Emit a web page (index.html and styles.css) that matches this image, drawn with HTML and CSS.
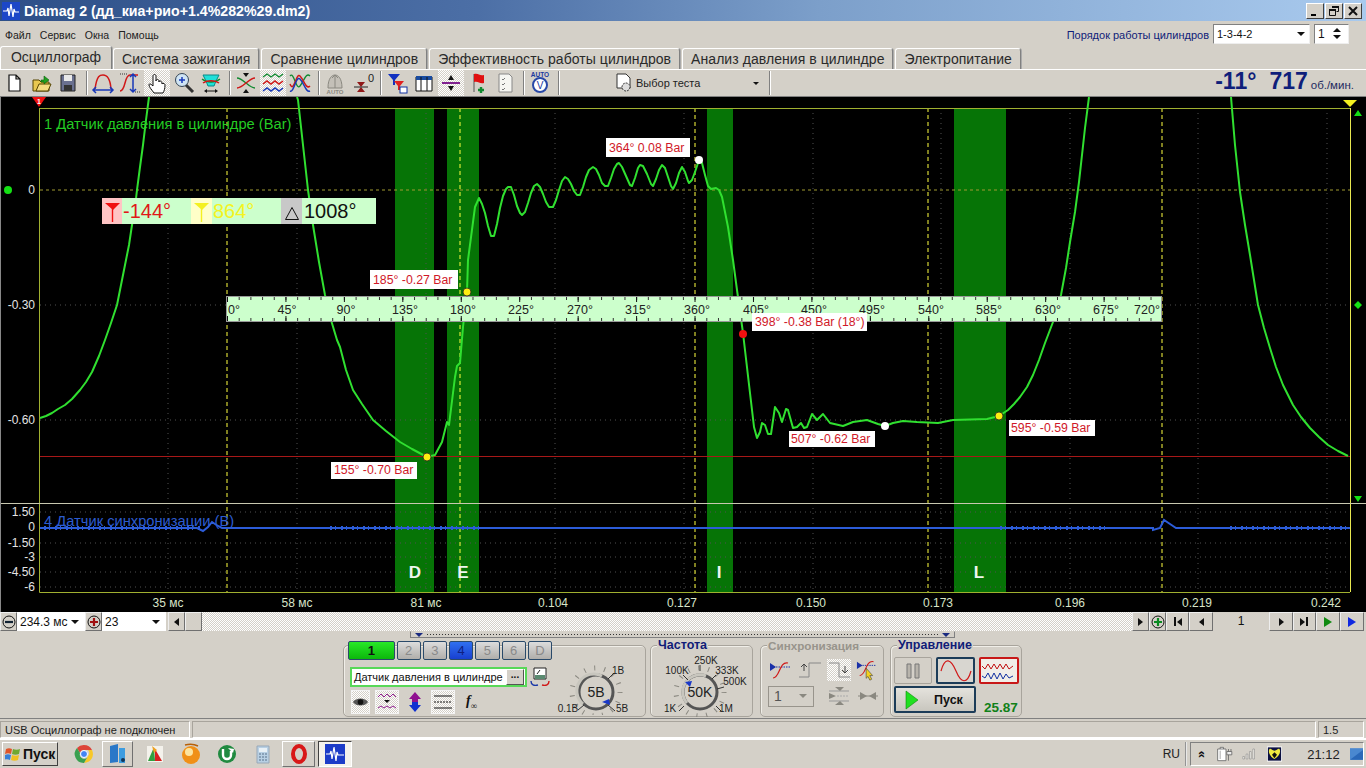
FILE: index.html
```html
<!DOCTYPE html>
<html lang="ru">
<head>
<meta charset="utf-8">
<title>Diamag 2</title>
<link rel="stylesheet" href="styles.css">
</head>
<body>
<div class="app">
  <header class="titlebar">
    <svg class="app-icon" width="18" height="18" viewBox="0 0 18 18"><rect width="18" height="18" fill="#1c47c8"/><path class="w-line" d="M1 9h4l1-3 1 8 2-12 2 13 1-8 1 3h4"/></svg>
    <span class="title-text">Diamag 2 (дд_киа+рио+1.4%282%29.dm2)</span>
    <div class="win-btns">
      <span class="win-btn"><svg width="12" height="12" viewBox="0 0 12 12"><path d="M2 9h5v2H2z"/></svg></span>
      <span class="win-btn"><svg width="12" height="12" viewBox="0 0 12 12"><path class="k-line" d="M4.5 1.5h6v5h-2M1.5 4.5h6v6h-6z"/><path class="k-line2" d="M4 2h7M1 5h7"/></svg></span>
      <span class="win-btn"><svg width="12" height="12" viewBox="0 0 12 12"><path class="k-line2" d="M2 2l8 8M10 2l-8 8"/></svg></span>
    </div>
  </header>

  <div class="menubar">
    <nav class="menu"><span>Файл</span><span>Сервис</span><span>Окна</span><span>Помощь</span></nav>
    <div class="order">
      <span class="order-label">Порядок работы цилиндров</span>
      <div class="combo order-combo"><span>1-3-4-2</span><i class="arrow-down"></i></div>
      <div class="combo order-spin"><span>1</span><div class="spin"><i class="arrow-up"></i><i class="arrow-down"></i></div></div>
    </div>
  </div>

  <div class="tabs">
    <span class="tab active">Осциллограф</span>
    <span class="tab">Система зажигания</span>
    <span class="tab">Сравнение цилиндров</span>
    <span class="tab">Эффективность работы цилиндров</span>
    <span class="tab">Анализ давления в цилиндре</span>
    <span class="tab">Электропитание</span>
  </div>

  <div class="toolbar">
    <div class="tb-group">
      <span class="tb"><svg viewBox="0 0 26 26"><path class="i-page" d="M8 5h7l4 4v12H8zM15 5v4h4"/></svg></span>
      <span class="tb"><svg viewBox="0 0 26 26"><path d="M5 10h6l2 2h8v9H5z" fill="#e8c850" stroke="#554400"/><path d="M8 21l3-7h12l-3 7z" fill="#f4dc80" stroke="#554400"/><path d="M13 10h3V6l5 4-5 4v-2h-3z" fill="#20a020" stroke="#0a600a" stroke-width=".6"/></svg></span>
      <span class="tb"><svg viewBox="0 0 26 26"><path d="M6 5h14v16H6z" fill="#6a7090" stroke="#222"/><path d="M9 5h8v6H9z" fill="#e8e8e8"/><path d="M9 15h8v6H9z" fill="#333"/></svg></span>
    </div>
    <i class="tb-sep"></i>
    <div class="tb-group">
      <span class="tb"><svg viewBox="0 0 26 26"><path class="i-red" d="M5 19C7 5 10 5 13 5s7 1 8 14"/><path class="i-blue" d="M3 20h20M6 17l-3 3 3 3M20 17l3 3-3 3"/></svg></span>
      <span class="tb"><svg viewBox="0 0 26 26"><path class="i-red" d="M3 21c6 0 4-16 10-16h8"/><path class="i-blue" d="M16 4v18M13 7l3-3 3 3M13 19l3 3 3-3"/><path class="i-dots" d="M3 4h8M18 22h6"/></svg></span>
      <span class="tb tb-on"><svg viewBox="0 0 26 26"><path d="M10 23c-2-3-5-6-5-8s2-1 4 1V6c0-2 3-2 3 0v5c0-2 3-2 3 0v1c0-2 3-1 3 1v1c0-1 3-1 3 1 0 4-1 6-2 8z" fill="#fff" stroke="#111"/></svg></span>
      <span class="tb"><svg viewBox="0 0 26 26"><path d="M15 15l7 7" stroke="#333" stroke-width="3"/><circle cx="11" cy="10" r="6.500" fill="#cfe4f4" stroke="#345"/><path class="i-blue" d="M8 10h6M11 7v6"/></svg></span>
      <span class="tb"><svg viewBox="0 0 26 26"><path d="M5 5h16l-3 6-2 5h-6l-2-5z" fill="#20e0d8" stroke="#0a8a88"/><path class="i-green" d="M4 9c5 4 13 4 18 0"/><path class="i-red" d="M5 13c4-3 12-3 16 0"/><path d="M8 21h10" stroke="#111"/><path d="M9 19l-3 2 3 2zM17 19l3 2-3 2z" fill="#111"/></svg></span>
    </div>
    <i class="tb-sep"></i>
    <div class="tb-group">
      <span class="tb"><svg viewBox="0 0 26 26"><path class="i-green" d="M4 8c6 0 12 10 18 10"/><path class="i-red" d="M4 18c6 0 12-10 18-10"/><path d="M10 3h6l-3 4zM10 23h6l-3-4z" fill="#111"/></svg></span>
      <span class="tb tb-on"><svg viewBox="0 0 26 26"><path class="i-green" d="M3 7l4-3 4 3 4-3 4 3 4-3"/><path class="i-red" d="M3 14l4-3 4 3 4-3 4 3 4-3"/><path class="i-blue" d="M3 21l4-3 4 3 4-3 4 3 4-3"/></svg></span>
      <span class="tb"><svg viewBox="0 0 26 26"><path class="i-green" d="M3 6c4-5 6 15 10 10s6-14 10-10"/><path class="i-red" d="M3 14c4 10 6-12 10-8s6 14 10 10"/><path class="i-blue" d="M3 21c4 2 6-16 10-12s6 14 10 12"/></svg></span>
    </div>
    <i class="tb-sep"></i>
    <div class="tb-group">
      <span class="tb"><svg viewBox="0 0 26 26"><path d="M6 18c0-10 4-13 7-13s7 3 7 13z" fill="#c4c0b8" stroke="#8a8880"/><path d="M13 5v13M10 8l3-3 3 3" stroke="#8a8880" fill="none"/><text class="auto-t" x="13" y="24">AUTO</text></svg></span>
      <span class="tb"><svg viewBox="0 0 26 26"><path d="M8 12h8l-4 5zM8 22h8l-4-5z" fill="#901818"/><path d="M5 17h14" stroke="#222"/><text class="zero-t" x="19" y="12">0</text></svg></span>
    </div>
    <i class="tb-sep"></i>
    <div class="tb-group">
      <span class="tb"><svg viewBox="0 0 26 26"><path d="M4 4h12l-5 6v5H9v-5z" fill="#1030c0"/><path d="M10 11h10l-4 5v4h-2v-4z" fill="#e02020"/><rect x="16" y="17" width="7" height="6" fill="#fff" stroke="#1030a0"/></svg></span>
      <span class="tb"><svg viewBox="0 0 26 26"><path d="M5 7h16v14H5z" fill="#fff" stroke="#111"/><path d="M5 6h16v4H5z" fill="#1a4ca0"/><path d="M10 7v14M16 7v14" stroke="#111"/></svg></span>
      <span class="tb tb-on"><svg viewBox="0 0 26 26"><path d="M4 13h18" stroke="#802090" stroke-width="2"/><path d="M10 10l3-5 3 5zM10 16l3 5 3-5z" fill="#111"/></svg></span>
      <span class="tb"><svg viewBox="0 0 26 26"><path d="M9 4v18" stroke="#555"/><path d="M9 4c5-1 5 2 10 1v8c-5 1-5-2-10-1z" fill="#e01010"/><path class="i-green2" d="M16 17v6M13 20h6"/></svg></span>
      <span class="tb"><svg viewBox="0 0 26 26"><path d="M7 4h10l3 3v15H7z" fill="#f6f6f2" stroke="#888"/><path d="M10 9l1 1 2-2M10 14l1 1 2-2M10 19l1 1 2-2" stroke="#777" fill="none"/></svg></span>
    </div>
    <i class="tb-sep"></i>
    <div class="tb-group">
      <span class="tb"><svg viewBox="0 0 26 26"><text class="auto-b" x="13" y="7">AUTO</text><circle cx="13" cy="15" r="7" fill="#fff" stroke="#2848a8" stroke-width="2"/><text class="v-t" x="13" y="19">V</text></svg></span>
    </div>
    <i class="tb-sep"></i>
    <div class="test-select">
      <svg width="20" height="22" viewBox="0 0 20 22"><path d="M3 2h9l4 4v10H3z" fill="#fff" stroke="#333"/><circle cx="12" cy="15" r="4" fill="#ddd" stroke="#333" stroke-dasharray="2 1"/></svg>
      <span>Выбор теста</span><i class="arrow-down"></i>
    </div>
    <i class="tb-sep tb-sep-end"></i>
    <div class="rpm"><b>-11°</b><b>717</b><small>об./мин.</small></div>
  </div>

  <svg class="chart" viewBox="0 97 1366 515" width="1366" height="515">
    <rect class="bg" x="0" y="97" width="1366" height="515"/>
    <g class="band">
      <rect x="395" y="108" width="39" height="485"/><rect x="447" y="108" width="32" height="485"/>
      <rect x="707" y="108" width="26" height="485"/><rect x="954" y="108" width="52" height="485"/>
    </g>
    <path class="grid" d="M168 108V592M297 108V592M426 108V592M555 108V592M684 108V592M813 108V592M941 108V592M1070 108V592M1198 108V592M1327 108V592"/>
    <path class="grid" d="M40 305H1350M40 420H1350M40 512H1350M40 543H1350M40 557H1350M40 572H1350M40 587H1350"/>
    <path class="zero" d="M40 190H1350"/>
    <path class="cursor" d="M227 108V592M460 108V592M695 108V592M928 108V592M1162 108V592"/>
    <path class="frame-top" d="M39.500 108.500H1350M39.500 108V592.500H1350"/>
    <path class="frame-right" d="M1350.500 108V592"/>
    <path class="frame-mid" d="M0 503.500H1366"/>
    <path class="red-line" d="M40 456.500H1350"/>
    <path class="edge" d="M0.500 97V612"/>

    <polyline class="trace" points="40,418 46,416 52,413 58,409 65,405 72,399 80,390 86,382 92,372 99,356 105,340 111,323 117,305 121,285 125,265 129,245 132,225 135,207 137,190 140,167 143,145 146,120 149,97"/>
    <polyline class="trace" points="297,97 298,100 303,145 308,190 313,225 319,262 325,295 331,320 337,340 340,347 346,370 353,390 362,404 373,420 386,431 400,442 412,449 427,457 435,455 442,442 447,422 449,425 455,377 457,366 460,363 463,327 467,292 468,260 475,207 479,198 482,204 485,213 488,226 491,236 494,236 497,224 500,208 503,196 506,189 508,187 511,187 514,195 517,206 520,213 522,215 525,212 528,203 531,193 534,186 537,184 540,187 543,194 546,202 549,207 553,207 556,200 559,190 562,181 565,177 568,179 571,184 574,191 577,195 580,195 583,187 586,177 589,170 593,167 596,169 599,175 602,183 605,186 608,186 611,178 614,169 617,164 619,163 622,167 626,176 630,185 632,186 635,178 638,168 640,165 643,166 647,174 651,184 653,186 656,179 659,170 662,165 665,168 668,177 671,186 673,189 676,183 679,173 682,167 685,172 688,181 689,183 692,180 695,172 699,160 702,163 705,175 708,186 711,189 716,188 719,190 722,197 728,227 733,260 737,290 743,333 750,393 754,427 757,438 760,432 762,423 765,425 768,434 771,434 775,407 779,413 782,422 786,409 788,410 793,428 797,427 801,423 804,428 807,427 812,414 817,420 823,414 830,423 843,426 853,422 867,420 878,424 885,426 893,423 903,421 917,422 938,423 953,420 987,419 999,416 1008,410 1014,404 1020,397 1027,387 1033,375 1039,360 1045,343 1053,322 1061,295 1066,268 1070,242 1075,212 1079,182 1082,155 1085,128 1089,97"/>
    <polyline class="trace" points="1231,97 1235,145 1240,192 1245,225 1250,255 1254,280 1258,305 1264,328 1270,348 1276,367 1283,385 1293,405 1301,417 1310,428 1319,437 1328,445 1338,451 1348,456"/>

    <path class="blue" d="M40 528H197L203 531 208 527 212 522 218 526 222 528H1153V530L1160 528 1164 520 1170 524 1176 528H1350"/>
    <path class="blue-noise" d="M44 528H200M330 528H480M1000 528H1105M1230 528H1348"/>

    <g class="ax-y">
      <text x="35" y="194">0</text><text x="35" y="309">-0.30</text><text x="35" y="424">-0.60</text>
      <text x="35" y="516">1.50</text><text x="35" y="531">0</text><text x="35" y="547">-1.50</text><text x="35" y="561">-3</text><text x="35" y="576">-4.50</text><text x="35" y="591">-6</text>
    </g>
    <g class="ax-x">
      <text x="168" y="607">35 мс</text><text x="297" y="607">58 мс</text><text x="426" y="607">81 мс</text>
      <text x="553" y="607">0.104</text><text x="682" y="607">0.127</text><text x="811" y="607">0.150</text><text x="938" y="607">0.173</text>
      <text x="1070" y="607">0.196</text><text x="1197" y="607">0.219</text><text x="1326" y="607">0.242</text>
    </g>
    <text class="ch1" x="44" y="129">1 Датчик давления в цилиндре (Bar)</text>
    <text class="ch4" x="44" y="526">4 Датчик синхронизации (В)</text>
    <g class="band-t">
      <text x="415" y="578">D</text><text x="463" y="578">E</text><text x="719" y="578">I</text><text x="979" y="578">L</text>
    </g>

    <rect class="ruler" x="226.500" y="296.500" width="935" height="25"/>
    <path class="tick-s" d="M227 298.500H1162M227 319.500H1162"/>
    <path class="tick-l" d="M227 299.500H1162M227 318.500H1162"/>
    <g class="ruler-t">
      <text x="234" y="314">0°</text><text x="287" y="314">45°</text><text x="346" y="314">90°</text><text x="405" y="314">135°</text><text x="463" y="314">180°</text><text x="521" y="314">225°</text><text x="580" y="314">270°</text><text x="638" y="314">315°</text><text x="697" y="314">360°</text><text x="756" y="314">405°</text><text x="814" y="314">450°</text><text x="872" y="314">495°</text><text x="931" y="314">540°</text><text x="989" y="314">585°</text><text x="1048" y="314">630°</text><text x="1106" y="314">675°</text><text x="1147" y="314">720°</text>
    </g>

    <g class="lbl-box">
      <rect x="606" y="138" width="84" height="19"/><rect x="370" y="270" width="88" height="19"/><rect x="752" y="313" width="115" height="18"/>
      <rect x="331" y="462" width="86" height="17"/><rect x="789" y="431" width="86" height="16"/><rect x="1009" y="420" width="86" height="16"/>
    </g>
    <g class="lbl">
      <text x="609" y="152">364° 0.08 Bar</text><text x="373" y="284">185° -0.27 Bar</text><text x="755" y="326">398° -0.38 Bar (18°)</text>
      <text x="334" y="474">155° -0.70 Bar</text><text x="791" y="443">507° -0.62 Bar</text><text x="1011" y="432">595° -0.59 Bar</text>
    </g>
    <circle class="m-w" cx="699" cy="160" r="4"/><circle class="m-y" cx="467" cy="292" r="4"/><circle class="m-r" cx="743" cy="334" r="4"/>
    <circle class="m-y" cx="427" cy="457" r="4"/><circle class="m-w" cx="885" cy="426" r="4"/><circle class="m-y" cx="999" cy="416" r="4"/>

    <circle class="mark" cx="8" cy="190" r="4"/>
    <path class="mark" d="M1358 301l4 4-4 4-4-4zM1354 116l4-6 4 6zM1354 496l4 6 4-6z"/>
    <path class="flag-r" d="M32 97h14l-7 10z"/><text class="flag-n" x="39" y="104">1</text>
    <path class="flag-y" d="M1343 100h14l-7 7z"/>

    <rect class="info" x="102" y="198" width="274" height="26"/>
    <rect class="info-r" x="102" y="198" width="20" height="26"/>
    <rect class="info-y" x="191" y="198" width="21" height="26"/>
    <rect class="info-g" x="281" y="198" width="21" height="26"/>
    <path class="flag-r" d="M105 203h15l-7 7z"/><path class="st-r" d="M112.500 208v14"/>
    <path class="flag-y" d="M194 203h15l-7 7z"/><path class="st-y" d="M201.500 208v14"/>
    <path class="tri" d="M285.500 219.500l6.500-12 6.500 12z"/>
    <text class="i-t r" x="123" y="218">-144°</text><text class="i-t y" x="213" y="218">864°</text><text class="i-t k" x="304" y="218">1008°</text>
  </svg>

  <div class="navrow">
    <span class="nbtn"><svg width="14" height="14" viewBox="0 0 14 14"><circle cx="7" cy="7" r="6" fill="#d4d0c8" stroke="#111"/><path d="M3 7h8" stroke="#123" stroke-width="2.200"/></svg></span>
    <div class="ncombo w67"><span>234.3 мс</span><i class="arrow-down"></i></div>
    <span class="nbtn"><svg width="14" height="14" viewBox="0 0 14 14"><circle cx="7" cy="7" r="6" fill="#d4d0c8" stroke="#111"/><path d="M3 7h8M7 3v8" stroke="#a01010" stroke-width="2.200"/></svg></span>
    <div class="ncombo w64"><span>23</span><i class="arrow-down"></i></div>
    <span class="nbtn left-gap"><i class="arrow-left"></i></span>
    <span class="nbtn"></span>
    <div class="dither"></div>
    <span class="nbtn"><i class="arrow-right"></i></span>
    <span class="nbtn"><svg width="14" height="14" viewBox="0 0 14 14"><circle cx="7" cy="7" r="6" fill="#d4d0c8" stroke="#111"/><path d="M3 7h8M7 3v8" stroke="#0a8a20" stroke-width="2.200"/></svg></span>
    <span class="nbtn w23"><i class="bar-l"></i><i class="arrow-left"></i></span>
    <span class="nbtn w24"><i class="arrow-left"></i></span>
    <span class="page-no">1</span>
    <span class="nbtn w24"><i class="arrow-right"></i></span>
    <span class="nbtn w23"><i class="arrow-right"></i><i class="bar-l"></i></span>
    <span class="nbtn w24"><i class="arrow-right green"></i></span>
    <span class="nbtn w24"><i class="arrow-right blue"></i></span>
  </div>

  <section class="panel">
    <div class="splitter"><i class="sp-arrow"></i><i class="sp-dots"></i><i class="sp-arrow"></i></div>
    <div class="groups">
      <div class="group g1">
        <div class="g1-left">
          <div class="channels">
            <span class="ch ch-on wide">1</span><span class="ch">2</span><span class="ch">3</span><span class="ch ch-blue">4</span><span class="ch">5</span><span class="ch">6</span><span class="ch">D</span>
          </div>
          <div class="sensor-row">
            <div class="sensor"><span>Датчик давления в цилиндре</span><b class="more">...</b></div>
            <svg class="sensor-ic" width="22" height="22" viewBox="0 0 22 22"><path d="M5 2h12v11H5z" fill="#fff" stroke="#222"/><path d="M6 9h10v4H6z" fill="#5a8a70"/><path d="M8 8l3-4" stroke="#222"/><path d="M2 15c0 4 3 5 7 4" stroke="#1a38a8" fill="none" stroke-width="1.400"/><path d="M20 15c0 4-3 5-7 4" stroke="#d01818" fill="none" stroke-width="1.400"/></svg>
          </div>
          <div class="ch-tools">
            <span class="ct ct-on"><svg width="18" height="14" viewBox="0 0 18 14"><path d="M1 7c3-5 13-5 16 0-3 5-13 5-16 0z" fill="#555"/><circle cx="9" cy="7" r="3" fill="#111"/></svg></span>
            <span class="ct ct-on w24"><svg width="20" height="20" viewBox="0 0 20 20"><path d="M1 5l3-3 3 3 3-3 3 3 3-3 3 3" stroke="#902090" fill="none"/><path d="M1 16l3-2 3 2 3-2 3 2 3-2 3 2" stroke="#902090" fill="none"/><path d="M7 8h6l-3 3z" fill="#111"/></svg></span>
            <span class="ct bare"><svg width="18" height="22" viewBox="0 0 18 22"><path d="M9 1l6 7h-3v3H6V8H3z" fill="#901090"/><path d="M9 21l6-7h-3v-3H6v3H3z" fill="#1030d0"/></svg></span>
            <span class="ct ct-on w24"><svg width="20" height="16" viewBox="0 0 20 16"><path d="M1 2h18M1 14h18" stroke="#111"/><path d="M1 8h18" stroke="#111" stroke-dasharray="2 1"/></svg></span>
            <span class="fx">f<sub>∞</sub></span>
          </div>
        </div>
        <svg class="knob k1" width="90" height="65" viewBox="-10 0 90 65">
          <circle class="k-ticks" cx="34" cy="42" r="24"/>
          <circle class="k-dark" cx="34" cy="42" r="17"/>
          <path class="k-light" d="M21 54A17 17 0 0 1 40 26"/>
          <path class="k-major" d="M46 29l6-6M46 55l7 6M22 55l-6 5"/>
          <path class="k-ptr" d="M40 52l7-3 1 6z"/>
          <text class="k-val" x="34" y="47">5В</text>
          <text class="k-lab" x="56" y="24">1В</text><text class="k-lab" x="6" y="62">0.1В</text><text class="k-lab" x="60" y="62">5В</text>
        </svg>
      </div>
      <div class="group g2">
        <span class="g-title">Частота</span>
        <svg class="knob k2" width="94" height="62" viewBox="0 0 94 62">
          <circle class="k-ticks" cx="44" cy="37" r="24"/>
          <circle class="k-dark" cx="44" cy="37" r="17"/>
          <path class="k-light" d="M31 48A17 17 0 0 1 50 21"/>
          <path class="k-major" d="M27 20l5 5M44 10v6M60 20l-4 4M68 32l-7 2M60 51l5 5M28 51l-5 5"/>
          <path class="k-ptr" d="M29 27l7-1-2 6z"/>
          <text class="k-val" x="44" y="42">50K</text>
          <text class="k-lab" x="21" y="19">100K</text><text class="k-lab" x="50" y="9">250K</text><text class="k-lab" x="71" y="19">333K</text><text class="k-lab" x="79" y="30">500K</text><text class="k-lab" x="14" y="57">1K</text><text class="k-lab" x="70" y="57">1M</text>
        </svg>
      </div>
      <div class="group g3">
        <span class="g-title dim">Синхронизация</span>
        <div class="sync-grid">
          <span class="sy"><svg width="24" height="22" viewBox="0 0 24 22"><path d="M2 8h20" stroke="#1a30a8" stroke-dasharray="1.500 1"/><path d="M1 4l6 4-6 4z" fill="#1a30a8"/><path d="M4 19c7 0 6-17 15-15" stroke="#d01818" fill="none" stroke-width="1.200"/></svg></span>
          <span class="sy"><svg width="24" height="22" viewBox="0 0 24 22"><path d="M1 18h10V4h12" stroke="#888" fill="none"/><path d="M6 5v7M3 8l3-3 3 3" stroke="#444" fill="none"/></svg></span>
          <span class="sy sy-on"><svg width="24" height="22" viewBox="0 0 24 22"><path d="M2 4h10v14h11" stroke="#888" fill="none"/><path d="M18 7v7M15 11l3 3 3-3" stroke="#444" fill="none"/></svg></span>
          <span class="sy"><svg width="26" height="26" viewBox="0 0 26 26"><path d="M2 8h20" stroke="#1a30a8" stroke-dasharray="1.500 1"/><path d="M1 4l6 4-6 4z" fill="#1a30a8"/><path d="M4 19c7 0 6-17 15-15" stroke="#d01818" fill="none" stroke-width="1.200"/><path d="M11 11l7 8h-3l2 4-2 1-2-4-2 2z" fill="#f4d020" stroke="#333" stroke-width=".6"/></svg></span>
          <div class="sy-combo"><span>1</span><i class="arrow-down dimmed"></i></div>
          <span class="sy"><svg width="24" height="22" viewBox="0 0 24 22"><path d="M2 6h20M2 16h20" stroke="#999"/><path d="M2 8l7 3-7 3zM8 2h9l-4 4zM8 20h9l-4-4z" fill="#8a8880"/><path d="M10 11h12" stroke="#aaa" stroke-dasharray="2 1"/></svg></span>
          <span class="sy"><svg width="24" height="16" viewBox="0 0 24 16"><path d="M2 8h20" stroke="#8a8880"/><path d="M4 4l7 4-7 4zM20 4l-7 4 7 4z" fill="#8a8880"/></svg></span>
        </div>
      </div>
      <div class="group g4">
        <span class="g-title">Управление</span>
        <div class="ctl-grid">
          <span class="cb cb-flat"><svg width="16" height="18" viewBox="0 0 16 18"><path d="M2 2h4v14H2zM10 2h4v14h-4z" fill="#b8b4ac" stroke="#777"/></svg></span>
          <span class="cb cb-dark"><svg width="32" height="22" viewBox="0 0 32 22"><path d="M1 11C5-4 11-1 16 11s11 14 15 0" stroke="#d01818" fill="none" stroke-width="1.200"/></svg></span>
          <span class="cb cb-red"><svg width="36" height="22" viewBox="0 0 36 22"><path d="M1 6l3 3 3-5 3 5 3-5 3 5 3-5 3 5 3-5 3 5 4-3" stroke="#c01010" fill="none"/><path d="M1 16l3 2 3-5 3 6 3-6 3 6 3-6 3 6 3-5 3 4 4-2" stroke="#1030a0" fill="none"/></svg></span>
          <span class="cb cb-run"><svg width="14" height="20" viewBox="0 0 14 20"><path d="M1 1l12 9-12 9z" fill="#20e020" stroke="#0a8a0a" stroke-width=".6"/></svg><b>Пуск</b></span>
          <b class="rate">25.87</b>
        </div>
      </div>
    </div>
  </section>

  <footer class="status">
    <span class="st st1">USB Осциллограф не подключен</span>
    <span class="st st2"></span>
    <span class="st st3">1.5</span>
  </footer>

  <div class="taskbar">
    <span class="start"><svg width="16" height="15" viewBox="0 0 16 15"><path d="M1 2c2-1 4-1 6 0l-1 5c-2-1-4-1-6 0z" fill="#e0552a"/><path d="M8 2c2 1 5 1 7 0l-1 5c-2 1-5 1-7 0z" fill="#70a830"/><path d="M0 8c2-1 4-1 6 0l-1 5c-2-1-4-1-6 0z" fill="#3880d8"/><path d="M7 8c2 1 5 1 7 0l-1 5c-2 1-5 1-7 0z" fill="#f0c020"/></svg><b>Пуск</b></span>
    <div class="apps">
      <span class="app-i"><svg width="22" height="22" viewBox="0 0 22 22"><path d="M11 2a9 9 0 0 1 8 5h-8a4 4 0 0 0-4 3L4 5a9 9 0 0 1 7-3z" fill="#dd4438"/><path d="M19 7a9 9 0 0 1-8 13l4-7a4 4 0 0 0 0-6z" fill="#f8c828"/><path d="M4 5a9 9 0 0 0 7 15l4-7a4 4 0 0 1-8-3z" fill="#3aa050"/><circle cx="11" cy="11" r="3.500" fill="#4285f4" stroke="#fff"/></svg></span>
      <span class="app-i app-btn"><svg width="20" height="22" viewBox="0 0 20 22"><path d="M2 3l8-2v18l-8 1z" fill="#2a78c8"/><path d="M11 5h6v15h-6z" fill="#3c9ce0"/><circle cx="15" cy="17" r="2" fill="#135"/></svg></span>
      <span class="app-i app-gap"><svg width="22" height="22" viewBox="0 0 22 22"><path d="M3 3h16v16H3z" fill="#f4f2ec"/><path d="M10 4l-6 14h7z" fill="#30a040"/><path d="M11 6l7 12h-7z" fill="#d82020"/><path d="M8 3l5 4-3 3z" fill="#f0a020"/></svg></span>
      <span class="app-i"><svg width="24" height="24" viewBox="0 0 24 24"><circle cx="12" cy="13" r="9" fill="#f09018"/><circle cx="10" cy="10" r="4" fill="#fce4a0"/><path d="M6 3c4-1 9-1 13 1" stroke="#b86008" fill="none" stroke-width="1.500"/></svg></span>
      <span class="app-i"><svg width="22" height="22" viewBox="0 0 22 22"><circle cx="11" cy="11" r="9" fill="#208a40"/><path d="M7 6v6a4 4 0 0 0 8 0V8" stroke="#fff" stroke-width="2.400" fill="none"/><path d="M12 5l6 1-1 4z" fill="#fff"/></svg></span>
      <span class="app-i"><svg width="18" height="22" viewBox="0 0 18 22"><path d="M3 3h12v17H3z" fill="#b8d0e4" stroke="#98a8b8"/><path d="M5 5h8v4H5z" fill="#e8f0f6"/><path d="M5 11h8M5 14h8M5 17h8" stroke="#7890a8" stroke-dasharray="2 1" stroke-width="1.500"/></svg></span>
      <span class="app-i app-btn w33"><svg width="18" height="22" viewBox="0 0 18 22"><ellipse cx="9" cy="11" rx="6" ry="8" fill="none" stroke="#d81818" stroke-width="4"/></svg></span>
      <span class="app-i app-act"><svg width="20" height="20" viewBox="0 0 20 20"><rect width="20" height="20" fill="#1c3cc8"/><path class="w-line" d="M1 10h4l1-3 1 8 2-12 2 14 1-9 1 3h6"/></svg></span>
    </div>
    <span class="lang">RU</span>
    <div class="tray">
      <span class="chev">»</span>
      <svg width="20" height="18" viewBox="0 0 20 18"><path d="M2 3h10v14H2zM5 3V1h4v2" fill="#fff" stroke="#666"/><path d="M5 5v10" stroke="#999"/><path d="M13 6h6v4h-6zM15 10v7M15 3v3M18 3v3" fill="#eee" stroke="#666"/></svg>
      <svg width="16" height="14" viewBox="0 0 16 14"><path d="M1 10h2v3H1zM5 7h2v6H5zM9 4h2v9H9zM13 1h2v12h-2z" fill="#f2f0ea" stroke="#888" stroke-width=".7"/></svg>
      <svg class="tray-bat" width="18" height="18" viewBox="0 0 18 18"><rect width="18" height="18" fill="#fff"/><rect x="1" y="1" width="16" height="16" fill="#0c1040"/><path d="M9 5c3 0 4-3 6-2 2 3 0 9-6 12C3 12 1 6 3 3c2-1 3 2 6 2z" fill="#f0ea40"/><path d="M9 7l-3 3 3 4 3-4z" fill="#111"/></svg>
      <span class="clock">21:12</span>
      <svg width="16" height="14" viewBox="0 0 16 14"><rect width="16" height="14" fill="#4a88d0"/><path d="M0 14L16 2v12z" fill="#2a68b8"/></svg>
    </div>
  </div>
</div>
</body>
</html>
```

FILE: styles.css
```css
* { box-sizing: border-box; }
html, body { margin: 0; padding: 0; }
body { width: 1366px; height: 768px; overflow: hidden; font-family: "Liberation Sans", Arial, sans-serif; color: #111; background: #d4d0c8; }
i { display: block; font-style: normal; }
.app { display: flex; flex-direction: column; width: 1366px; height: 768px; }

/* title bar */
.titlebar { flex: 0 0 21px; display: flex; align-items: center; padding: 0 4px 0 2px; background: linear-gradient(90deg, #2d4f88 0%, #4c6fa6 35%, #7c9fca 60%, #a9caee 100%); }
.app-icon { flex: none; }
.title-text { margin-left: 4px; font-size: 14.200px; font-weight: 700; color: #fff; }
.win-btns { margin-left: auto; display: flex; gap: 1px; }
.win-btn { width: 18px; height: 16px; display: flex; align-items: center; justify-content: center; background: #d4d0c8; border: 1px solid; border-color: #fff #404040 #404040 #fff; }
.k-line { fill: none; stroke: #111; }
.k-line2 { fill: none; stroke: #111; stroke-width: 2; }
.w-line { fill: none; stroke: #fff; stroke-width: 1.200; }

/* menu row */
.menubar { flex: 0 0 25px; display: flex; align-items: center; justify-content: space-between; padding: 0 17px 0 5px; }
.menu { display: flex; gap: 9px; font-size: 10.500px; color: #222; margin-top: 2px; }
.order { display: flex; align-items: center; }
.order-label { font-size: 11px; color: #101c78; margin-right: 4px; margin-top: 2px; }
.combo { height: 20px; display: flex; align-items: center; justify-content: space-between; background: #fff; border: 1px solid; border-color: #808080 #eee #eee #808080; font-size: 11px; padding: 0 4px 0 3px; }
.order-combo { width: 97px; margin-right: 4px; }
.order-spin { width: 35px; font-size: 12px; }
.spin { display: flex; flex-direction: column; gap: 3px; margin-right: 3px; }
.arrow-down { width: 0; height: 0; border: 4px solid transparent; border-top: 4px solid #111; border-bottom: 0; }
.arrow-up { width: 0; height: 0; border: 4px solid transparent; border-bottom: 4px solid #111; border-top: 0; }
.arrow-left { width: 0; height: 0; border: 4px solid transparent; border-right: 5px solid #111; border-left: 0; }
.arrow-right { width: 0; height: 0; border: 4px solid transparent; border-left: 5px solid #111; border-right: 0; }
.arrow-right.green { border-left-color: #108a10; border-width: 5px 0 5px 8px; }
.arrow-right.blue { border-left-color: #1028e0; border-width: 5px 0 5px 8px; }
.arrow-down.dimmed { border-top-color: #8a8880; }
.bar-l { width: 2px; height: 9px; background: #111; margin: 0 1px; }

/* tabs */
.tabs { flex: 0 0 23px; display: flex; align-items: flex-end; gap: 2px; }
.tab { height: 21px; padding: 0 8px; display: flex; align-items: center; justify-content: center; font-size: 14px; letter-spacing: .06px; color: #2a2a2a; background: #d4d0c8; border: 1px solid #fff; border-right-color: #808080; border-bottom: 0; border-radius: 3px 3px 0 0; box-shadow: 1px 0 0 #aaa; white-space: nowrap; }
.tab.active { height: 23px; padding: 0 0 2px; margin-right: -1px; width: 112px; letter-spacing: 0; }

/* toolbar */
.toolbar { flex: 0 0 28px; display: flex; align-items: center; padding-left: 1px; border-top: 1px solid #fff; border-bottom: 1px solid #808080; overflow: hidden; }
.tb-group { display: flex; gap: 1px; }
.tb { width: 26px; height: 26px; display: block; }
.tb svg { display: block; width: 26px; height: 26px; }
.tb-on { background: repeating-conic-gradient(#d4d0c8 0 25%, #fff 0 50%) 0 0 / 2px 2px; }
.tb-sep { width: 2px; height: 24px; margin: 0 2px 0 5px; border-left: 1px solid #808080; border-right: 1px solid #fff; }
.tb-sep-end { margin: 0; }
.i-red { fill: none; stroke: #d01818; stroke-width: 1.500; }
.i-blue { fill: none; stroke: #1838b8; stroke-width: 1.500; }
.i-green { fill: none; stroke: #108a30; stroke-width: 1.300; }
.i-green2 { fill: none; stroke: #108a30; stroke-width: 2.400; }
.i-dots { fill: none; stroke: #333; stroke-dasharray: 1 1; }
.i-page { fill: #fff; stroke: #111; stroke-width: 1.200; }
.auto-t { font-size: 6px; fill: #8a8880; text-anchor: middle; font-weight: 700; }
.auto-b { font-size: 6.500px; fill: #1a38a0; text-anchor: middle; font-weight: 700; }
.zero-t { font-size: 11px; fill: #222; }
.v-t { font-size: 10px; fill: #1a38a0; text-anchor: middle; }
.test-select { width: 207px; display: flex; align-items: center; padding-left: 52px; font-size: 11px; color: #222; }
.test-select span { margin-left: 2px; }
.test-select .arrow-down { margin-left: 53px; border-width: 3px 3px 0; }
.rpm { margin-left: auto; padding-right: 12px; display: flex; align-items: baseline; color: #0f1e7a; font-size: 23px; line-height: 24px; }
.rpm b:first-child { margin-right: 13px; }
.rpm small { font-size: 11.500px; margin-left: 3px; color: #222a60; }

/* chart */
.chart { flex: 0 0 515px; display: block; }
.chart text { font-family: "Liberation Sans", Arial, sans-serif; }
.bg { fill: #000; }
.band { fill: #067406; }
.grid { fill: none; stroke: #505050; stroke-dasharray: 1 4; }
.zero { fill: none; stroke: #a09a30; stroke-dasharray: 3 3; }
.cursor { fill: none; stroke: #ffff40; stroke-dasharray: 4 3; }
.frame-top { fill: none; stroke: #a0b030; }
.frame-right { fill: none; stroke: #e8e850; }
.frame-mid { fill: none; stroke: #c8c8b0; }
.red-line { fill: none; stroke: #a81818; }
.edge { fill: none; stroke: #888; }
.trace { fill: none; stroke: #30e030; stroke-width: 2; stroke-linejoin: round; }
.blue { fill: none; stroke: #2c5cd8; stroke-width: 2; }
.blue-noise { fill: none; stroke: #2c5cd8; stroke-width: 4; stroke-dasharray: 2 3 1 5; }
.ax-y text { font-size: 12px; fill: #e4e4e4; text-anchor: end; }
.ax-x text { font-size: 12px; fill: #d8e4c8; text-anchor: middle; }
.ch1 { font-size: 14.700px; fill: #24cc24; }
.ch4 { font-size: 14.700px; fill: #2c5cd0; }
.band-t text { font-size: 17px; font-weight: 700; fill: #eef6ee; text-anchor: middle; }
.ruler { fill: #ccffcc; stroke: #9a9a9a; }
.tick-s { fill: none; stroke: #333; stroke-width: 3; stroke-dasharray: 1 10.690; }
.tick-l { fill: none; stroke: #111; stroke-width: 5; stroke-dasharray: 1 57.440; }
.ruler-t text { font-size: 12.500px; fill: #222; text-anchor: middle; }
.lbl-box rect { fill: #fff; }
.lbl text { font-size: 12.300px; fill: #d01828; }
.m-w { fill: #fff; }
.m-y { fill: #ffee10; stroke: #222; stroke-width: .8; }
.m-r { fill: #f01010; }
.mark { fill: #14e014; }
.flag-r { fill: #f01010; }
.flag-y { fill: #f4f020; }
.flag-n { font-size: 7px; font-weight: 700; fill: #fff; text-anchor: middle; }
.info { fill: #ccffcc; }
.info-r { fill: #ffc4c4; }
.info-y { fill: #ffffc8; }
.info-g { fill: #c8c8c8; }
.st-r { stroke: #f01010; stroke-width: 1.400; }
.st-y { stroke: #f4f020; stroke-width: 1.400; }
.tri { fill: none; stroke: #111; }
.i-t { font-size: 20px; }
.i-t.r { fill: #e01818; }
.i-t.y { fill: #f4f420; }
.i-t.k { fill: #111; }

/* navigation row */
.navrow { flex: 0 0 19px; display: flex; align-items: stretch; padding-right: 2px; }
.nbtn { width: 17px; flex: none; display: flex; align-items: center; justify-content: center; background: #d4d0c8; border: 1px solid; border-color: #eee #707070 #707070 #eee; }
.nbtn.w23 { width: 23px; }
.nbtn.w24 { width: 24px; }
.left-gap { margin-left: 2px; }
.ncombo { display: flex; align-items: center; justify-content: space-between; background: #fff; font-size: 12px; padding: 0 6px 0 3px; }
.w67 { width: 68px; }
.w64 { width: 64px; }
.dither { flex: 1; background: repeating-conic-gradient(#d4d0c8 0 25%, #fff 0 50%) 0 0 / 2px 2px; }
.page-no { flex: none; width: 56px; text-align: center; font-size: 12px; line-height: 19px; }

/* control panel */
.panel { flex: 0 0 87px; display: flex; flex-direction: column; }
.splitter { flex: none; width: 545px; height: 7px; margin-left: 410px; display: flex; align-items: center; padding: 0 4px; gap: 4px; background: #d4d0c8; border: 1px solid #808080; border-top-color: #d4d0c8; }
.sp-arrow { width: 0; height: 0; border: 4px solid transparent; border-top: 4px solid #1a2a80; border-bottom: 0; }
.sp-dots { flex: 1; height: 1px; background: repeating-linear-gradient(90deg, #333 0 1px, transparent 1px 3px); }
.groups { display: flex; margin: 7px 0 0 343px; height: 72px; }
.group { position: relative; border: 1px solid #a8a49c; border-radius: 5px; box-shadow: inset 1px 1px 0 #f0eee8; display: flex; }
.g1 { width: 303px; margin-right: 4px; padding-left: 4px; }
.g2 { width: 103px; margin-right: 7px; }
.g3 { width: 124px; margin-right: 6px; }
.g4 { width: 132px; }
.g-title { position: absolute; left: 6px; top: -7px; padding: 0 1px; background: #d4d0c8; font-size: 12.500px; font-weight: 700; line-height: 13px; color: #101c78; }
.g-title.dim { color: #98948c; font-size: 11.700px; }
.g1-left { display: flex; flex-direction: column; flex: none; width: 204px; margin-top: -5px; }
.channels { display: flex; gap: 2px; height: 19px; }
.ch { width: 25px; display: flex; align-items: center; justify-content: center; font-size: 13px; color: #8a8a8a; background: linear-gradient(#dcdcdc, #b0aeaa); border: 1px solid #2a4a6a; border-radius: 2px; }
.ch.wide { width: 48px; }
.ch-on { color: #111; font-weight: 700; background: linear-gradient(#28e828, #0cb80c); }
.ch-blue { color: #102080; background: linear-gradient(#3070f0, #1840d0); }
.sensor-row { display: flex; align-items: center; margin-top: 6px; margin-left: 2px; gap: 2px; }
.sensor { flex: none; width: 177px; height: 20px; display: flex; align-items: center; justify-content: space-between; background: #fff; border: 2px solid #58d858; padding: 0 1px 0 2px; font-size: 11px; white-space: nowrap; }
.sensor-ic { flex: none; }
.more { width: 18px; height: 16px; font-size: 10px; line-height: 9px; text-align: center; background: #d4d0c8; border: 1px solid; border-color: #fff #555 #555 #fff; }
.ch-tools { display: flex; align-items: center; margin: 2px 0 0 3px; gap: 5px; }
.ct { width: 19px; height: 24px; display: flex; align-items: center; justify-content: center; }
.ct.w24 { width: 24px; }
.ct-on { background: repeating-conic-gradient(#d4d0c8 0 25%, #fff 0 50%) 0 0 / 2px 2px; border: 1px solid #f4f4f4; }
.ct.bare { width: 22px; }
.fx { font-family: "Liberation Serif", serif; font-style: italic; font-weight: 700; font-size: 14px; margin-left: 6px; }
.fx sub { font-size: 9px; }
.knob { display: block; flex: none; }
.k1 { margin: 4px 0 0 0; }
.k2 { margin: 9px 0 0 5px; }
.k-ticks { fill: none; stroke: #8a8880; stroke-width: 5; stroke-dasharray: 1 9.050; }
.k-dark { fill: #d4d0c8; stroke: #555; stroke-width: 3; }
.k-light { fill: none; stroke: #c8c6be; stroke-width: 3; }
.k-major { fill: none; stroke: #333; }
.k-ptr { fill: #1a38c8; }
.k-val { font-size: 14px; fill: #222; text-anchor: middle; }
.k-lab { font-size: 10px; fill: #222; text-anchor: middle; }
.sync-grid { display: grid; grid-template-columns: 29px 29px 29px 29px; grid-auto-rows: 26px; margin: 11px 0 0 5px; align-items: center; justify-items: center; }
.sy { width: 24px; height: 22px; display: flex; align-items: center; justify-content: center; }
.sy-on { background: repeating-conic-gradient(#d4d0c8 0 25%, #fff 0 50%) 0 0 / 2px 2px; }
.sy-combo { grid-column: span 2; justify-self: start; width: 46px; height: 21px; margin-left: 2px; display: flex; align-items: center; justify-content: space-between; padding: 0 6px 0 5px; border: 1px solid #98948c; font-size: 14px; color: #555; }
.ctl-grid { display: grid; grid-template-columns: 38px 39px 40px; column-gap: 4px; row-gap: 2px; grid-auto-rows: 27px; margin: 11px 0 0 3px; }
.cb { display: flex; align-items: center; justify-content: center; border-radius: 2px; }
.cb-flat { border: 1px solid #a8a49c; }
.cb-dark { border: 2px solid #1c3c58; background: #d8d6d0; }
.cb-red { border: 2px solid #c81818; background: #f0eee8; }
.cb-run { grid-column: span 2; width: 82px; background: linear-gradient(#e4e2dc, #c8c6be); border: 2px solid #1c3c58; justify-content: flex-start; padding-left: 9px; gap: 15px; }
.cb-run b { font-size: 12.500px; color: #111; }
.rate { align-self: end; justify-self: center; margin: 0 -2px -2px 2px; color: #108018; font-size: 13.500px; }

/* status bar */
.status { flex: 0 0 21px; display: flex; gap: 2px; border-top: 1px solid #808080; padding: 2px 2px 1px 0; box-shadow: inset 0 -1px 0 #fff; }
.st { height: 17px; font-size: 11px; line-height: 16px; padding-left: 4px; color: #222; border: 1px solid; border-color: #a8a49c #fff #fff #a8a49c; }
.st1 { width: 190px; }
.st2 { flex: 1; }
.st3 { width: 46px; }

/* taskbar */
.taskbar { flex: 0 0 29px; display: flex; align-items: center; padding-left: 2px; border-top: 1px solid #fff; }
.start { width: 56px; height: 24px; display: flex; align-items: center; gap: 2px; padding-left: 2px; border: 1px solid; border-color: #fff #404040 #404040 #fff; font-size: 14px; }
.apps { display: flex; align-items: center; margin-left: 8px; }
.app-i { width: 36px; height: 26px; display: flex; align-items: center; justify-content: center; }
.app-btn { width: 31px; border: 1px solid; border-color: #fff #707070 #707070 #fff; }
.app-btn.w33 { width: 33px; margin: 0 3px 0 1px; }
.app-gap { margin-left: 4px; }
.app-act { width: 34px; background: #f4f2ec; border: 1px solid; border-color: #404040 #fff #fff #404040; }
.lang { margin-left: auto; font-size: 12px; color: #222; padding-right: 5px; border-right: 2px groove #e8e8e8; height: 24px; line-height: 24px; margin-right: 3px; }
.tray { width: 174px; height: 24px; display: flex; align-items: center; gap: 9px; padding-left: 6px; border: 1px solid; border-color: #808080 #fff #fff #808080; margin-right: 2px; }
.chev { transform: rotate(-90deg); font-size: 13px; font-weight: 700; width: 8px; text-align: center; margin-right: 3px; }
.tray-bat { margin-left: 3px; }
.clock { font-size: 13px; color: #222; margin: 0 1px 0 16px; }
```
